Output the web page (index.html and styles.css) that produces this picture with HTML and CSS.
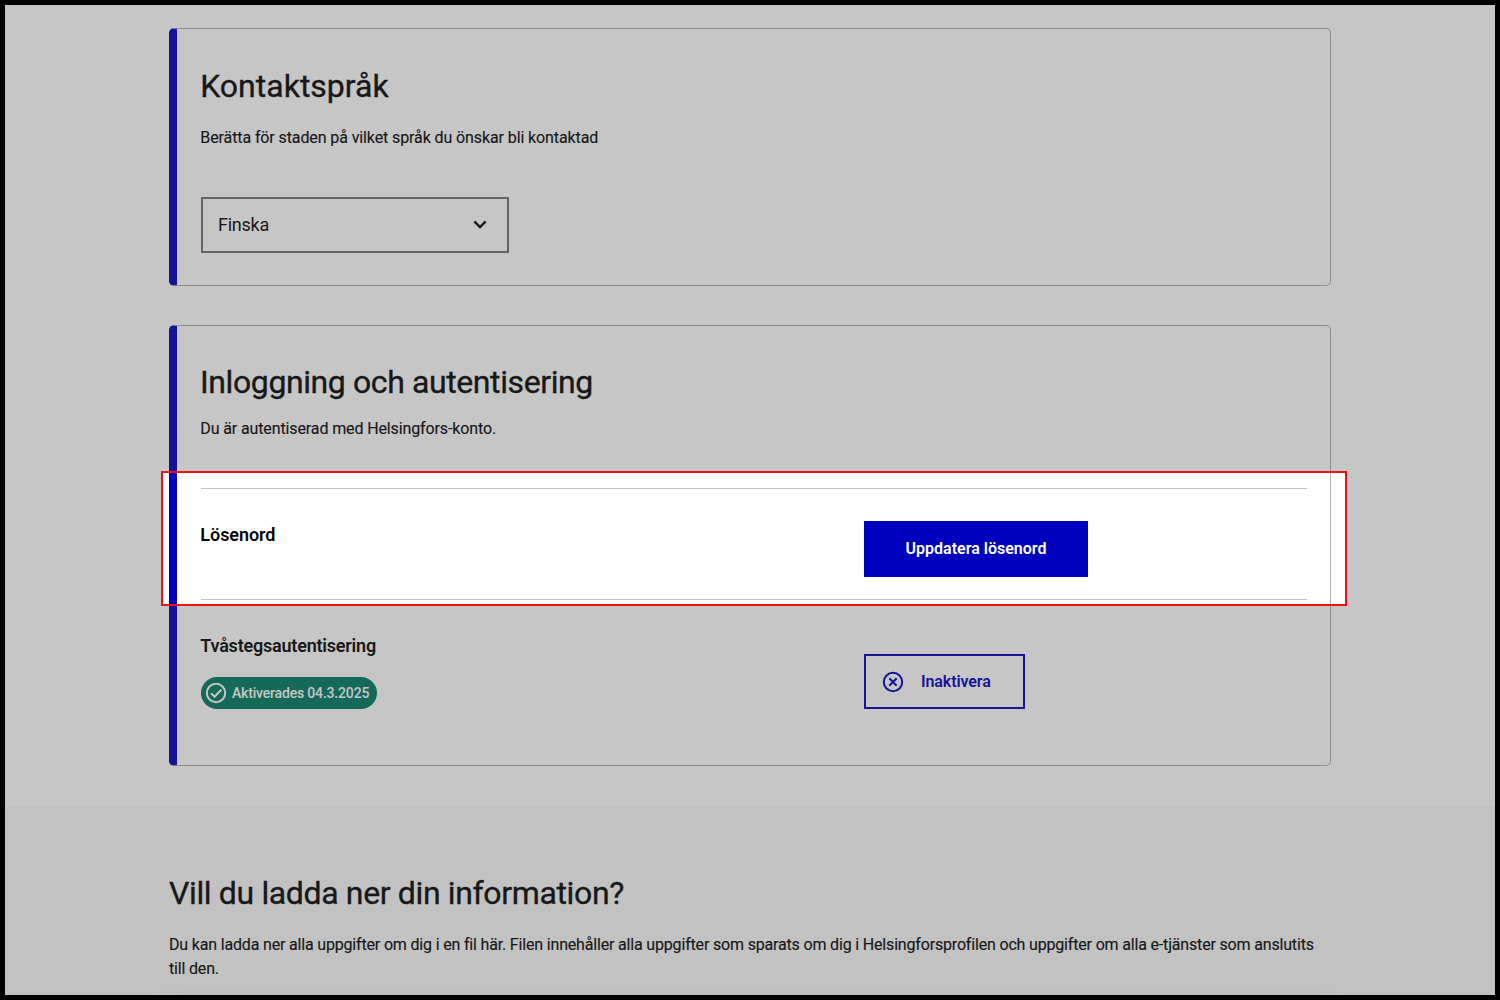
FILE: index.html
```html
<!DOCTYPE html>
<html lang="sv">
<head>
<meta charset="utf-8">
<title>Helsingforsprofilen</title>
<link rel="stylesheet" href="styles.css">
</head>
<body>
<div class="frame">
  <main class="profile">
    <section class="card card-language">
      <h2 class="title"><span class="t-language">Kontaktspråk</span></h2>
      <p class="text lead-language"><span class="t-lead">Berätta för staden på vilket språk du önskar bli kontaktad</span></p>
      <div class="select">
        <span class="t-select">Finska</span>
        <svg class="chevron" viewBox="0 0 24 24"><path d="M6.300 9.300 12 15l5.700-5.700"/></svg>
      </div>
    </section>
    <section class="card card-login">
      <h2 class="title"><span class="t-login">Inloggning och autentisering</span></h2>
      <p class="text"><span class="t-auth">Du är autentiserad med Helsingfors-konto.</span></p>
      <div class="row row-password">
        <h3 class="label"><span class="t-password">Lösenord</span></h3>
        <button class="button primary"><span class="t-update">Uppdatera lösenord</span></button>
      </div>
      <div class="row row-twostep">
        <div>
          <h3 class="label"><span class="t-twostep">Tvåstegsautentisering</span></h3>
          <div class="badge">
            <svg class="icon" viewBox="0 0 24 24"><circle cx="12" cy="12" r="9.200"/><path d="m7 12.200 3.600 3.600 6.700-7"/></svg>
            <span class="t-badge">Aktiverades 04.3.2025</span>
          </div>
        </div>
        <button class="button secondary">
          <svg class="icon" viewBox="0 0 24 24"><circle cx="12" cy="12" r="9.200"/><path d="m8.300 8.300 7.400 7.400m0-7.400-7.400 7.400"/></svg>
          <span class="t-disable">Inaktivera</span>
        </button>
      </div>
    </section>
  </main>
  <section class="download">
    <h2 class="title"><span class="t-download">Vill du ladda ner din information?</span></h2>
    <p class="text"><span class="t-info">Du kan ladda ner alla uppgifter om dig i en fil här. Filen innehåller alla uppgifter som sparats om dig i Helsingforsprofilen och uppgifter om alla e-tjänster som anslutits</span><br><span class="t-info">till den.</span></p>
    <div class="panel"></div>
  </section>
  <div class="spotlight"></div>
</div>
</body>
</html>
```
FILE: styles.css
```css
* { box-sizing: border-box; }
body { margin: 0; background: #000; }
h2, h3, p { margin: 0; }
.frame {
  position: relative;
  width: 1500px;
  height: 1000px;
  border: 5px solid #000;
  overflow: hidden;
  background: #fff;
  color: #060606;
  font-family: Roboto, "Liberation Sans", sans-serif;
}
.profile {
  display: flex;
  flex-direction: column;
  gap: 39px;
  height: 801px;
  padding: 23px 164px 0;
}
.card {
  border: 1px solid #acacac;
  border-left: 8px solid #0000bf;
  border-radius: 5px;
  padding: 34px 23px 0 24px;
}
.card-language { height: 258px; }
.card-login { height: 441px; }
.title {
  font-size: 32px;
  line-height: 46px;
  font-weight: 400;
  white-space: nowrap;
  -webkit-text-stroke: .35px currentColor;
}
.text {
  font-size: 16px;
  line-height: 24px;
  white-space: nowrap;
  -webkit-text-stroke: .15px currentColor;
}
.lead-language { margin-top: 17px; }
.card-login .title { margin-top: -1px; }
.card-login .text { margin-top: 12px; }
.select {
  display: flex;
  align-items: center;
  justify-content: space-between;
  width: 308px;
  height: 56px;
  margin-top: 47px;
  padding: 0 15px 2px;
  border: 2px solid #757575;
  font-size: 18px;
}
.chevron { width: 24px; height: 24px; fill: none; stroke: #060606; stroke-width: 2.4; }
.row { display: grid; grid-template-columns: 663px 1fr; align-items: start; border-top: 1px solid #bfbfbf; }
.row-password { height: 111px; margin-top: 47px; padding-top: 32px; }
.row-password .button { margin-top: -.5px; }
.row-twostep { padding-top: 32px; }
.label { font-size: 18px; line-height: 27px; font-weight: 600; }
.button {
  display: flex;
  align-items: center;
  height: 56px;
  border: 2px solid #0000bf;
  font: 600 16px/24px Roboto, "Liberation Sans", sans-serif;
}
.primary { justify-content: center; width: 224px; background: #0000bf; color: #fff; }
.secondary { width: 161px; height: 55px; margin-top: 22px; padding: 0 15px; gap: 16px; background: none; color: #0000bf; }
.icon { flex: none; width: 24px; height: 24px; fill: none; stroke: currentColor; stroke-width: 2; }
.badge {
  display: inline-flex;
  align-items: center;
  gap: 4px;
  width: 176px;
  height: 32px;
  margin-top: 18px;
  padding: 0 3px;
  border-radius: 16px;
  background: #007a64;
  color: #fff;
  font-size: 14px;
  font-weight: 500;
  white-space: nowrap;
}

/* Tracking per text run */
.t-language { margin-left: -.8px; }
.t-lead { margin-left: -.7px; letter-spacing: -.105px; }
.t-select { letter-spacing: -.25px; }
.t-login { margin-left: -1px; letter-spacing: -.4px; }
.t-auth { margin-left: -.7px; letter-spacing: -.12px; }
.t-password { margin-left: -.7px; letter-spacing: -.05px; }
.t-twostep { margin-left: -.7px; letter-spacing: -.21px; }
.t-badge { letter-spacing: -.18px; }
.t-disable { letter-spacing: -.1px; }
.t-download { letter-spacing: -.36px; }
.t-info { letter-spacing: -.173px; }

.download { height: 189px; padding: 65px 164px 0; background: #f9f9fa; }
.download .title { margin-top: -1px; }
.download .text { margin-top: 17px; }
.panel { height: 60px; margin-top: 27px; box-shadow: 0 0 24px rgba(0, 0, 0, .25); }
/* Highlights the password row and dims everything around it. */
.spotlight {
  position: absolute;
  left: 156px;
  top: 466px;
  width: 1186px;
  height: 135px;
  border: 2px solid #ee1111;
  box-shadow: 0 0 0 1500px rgba(66, 66, 66, .3);
}
```
